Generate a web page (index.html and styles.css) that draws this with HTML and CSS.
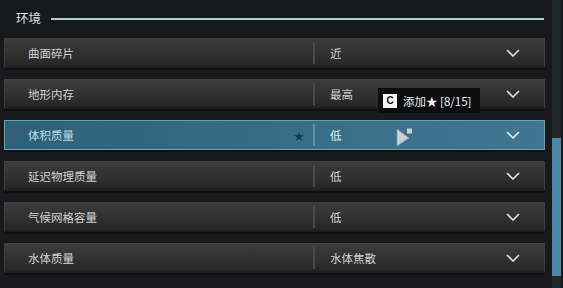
FILE: index.html
```html
<!DOCTYPE html>
<html lang="zh">
<head>
<meta charset="utf-8">
<link rel="stylesheet" href="styles.css">
</head>
<body>
<div class="page">
  <div class="main">
    <div class="header">
      <span class="title">环境</span>
      <span class="rule"></span>
    </div>
    <div class="list">
      <div class="row">
        <div class="label">曲面碎片</div>
        <div class="value">近</div>
        <div class="chev"><svg width="14" height="8" viewBox="0 0 14 8"><path d="M1 1 L7 7 L13 1" fill="none" stroke="#e2e2e2" stroke-width="1.6"/></svg></div>
      </div>
      <div class="row">
        <div class="label">地形内存</div>
        <div class="value">最高</div>
        <div class="chev"><svg width="14" height="8" viewBox="0 0 14 8"><path d="M1 1 L7 7 L13 1" fill="none" stroke="#e2e2e2" stroke-width="1.6"/></svg></div>
      </div>
      <div class="row active">
        <div class="label">体积质量<span class="star">★</span></div>
        <div class="value">低</div>
        <div class="chev"><svg width="14" height="8" viewBox="0 0 14 8"><path d="M1 1 L7 7 L13 1" fill="none" stroke="#dfeef4" stroke-width="1.6"/></svg></div>
      </div>
      <div class="row">
        <div class="label">延迟物理质量</div>
        <div class="value">低</div>
        <div class="chev"><svg width="14" height="8" viewBox="0 0 14 8"><path d="M1 1 L7 7 L13 1" fill="none" stroke="#e2e2e2" stroke-width="1.6"/></svg></div>
      </div>
      <div class="row">
        <div class="label">气候网格容量</div>
        <div class="value">低</div>
        <div class="chev"><svg width="14" height="8" viewBox="0 0 14 8"><path d="M1 1 L7 7 L13 1" fill="none" stroke="#e2e2e2" stroke-width="1.6"/></svg></div>
      </div>
      <div class="row">
        <div class="label">水体质量</div>
        <div class="value">水体焦散</div>
        <div class="chev"><svg width="14" height="8" viewBox="0 0 14 8"><path d="M1 1 L7 7 L13 1" fill="none" stroke="#e2e2e2" stroke-width="1.6"/></svg></div>
      </div>
    </div>
    <div class="tooltip"><span class="key">C</span><span class="tip-text">添加★ [8/15]</span></div>
    <svg class="cursor" width="18" height="20" viewBox="0 0 18 20">
      <path d="M1 1 L1 18 L13 10 Z" fill="#c8d2d6" stroke="#8a989e" stroke-width="0.8"/>
      <rect x="11" y="0.5" width="5" height="5" fill="#c8d2d6"/>
    </svg>
  </div>
  <div class="scroll"><div class="thumb"></div></div>
</div>
</body>
</html>
```
FILE: styles.css
```css
html, body {
  margin: 0;
  padding: 0;
}
body {
  width: 563px;
  height: 288px;
  overflow: hidden;
  background: #17191c;
  font-family: "Noto Sans CJK SC", "Noto Sans", sans-serif;
  font-size: 11.5px;
  color: #d2d2d2;
}
.page {
  display: flex;
  height: 288px;
}
.main {
  position: relative;
  width: 552px;
}
.header {
  display: flex;
  align-items: center;
  height: 38px;
  padding-left: 16px;
  padding-right: 8px;
  box-sizing: border-box;
}
.title {
  font-size: 12.5px;
  color: #dfe3e4;
  margin-right: 10px;
  margin-top: -3px;
}
.rule {
  flex: 1;
  height: 2px;
  background: #a9cfcf;
}
.list {
  display: flex;
  flex-direction: column;
  gap: 11px;
  margin-left: 4px;
  width: 541px;
}
.row {
  display: grid;
  grid-template-columns: 308px 1fr 40px;
  align-items: center;
  height: 30px;
  box-sizing: border-box;
  background: linear-gradient(#3c3c3c, #2b2b2b 80%, #242424);
  border: 1px solid #3f3f3f;
  border-bottom: 2px solid #1e1e1e;
  box-shadow: 0 2px 0 #101010;
}
.label {
  display: flex;
  align-items: center;
  padding-left: 23px;
  height: 100%;
}
.value {
  display: flex;
  align-items: center;
  height: 22px;
  padding-left: 15px;
  border-left: 2px solid #4a4a4a;
}
.chev {
  display: flex;
  align-items: center;
  justify-content: flex-start;
  padding-left: 2px;
  height: 100%;
}
.row.active {
  background: linear-gradient(90deg, #2f6078, #3a6f88 60%, #3f7690);
  border: 1px solid #6aa0b8;
  color: #b9dcea;
}
.row.active .value {
  border-left-color: #5d8ea4;
  color: #dbeef6;
}
.star {
  margin-left: auto;
  margin-right: 9px;
  color: #1c3a4c;
  font-size: 10px;
}
.tooltip {
  position: absolute;
  left: 378px;
  top: 88px;
  height: 25px;
  padding: 0 8px 0 5px;
  display: flex;
  align-items: center;
  gap: 6px;
  background: #0c0d0e;
  color: #f0f0f0;
  font-size: 11.5px;
}
.key {
  display: inline-flex;
  align-items: center;
  justify-content: center;
  width: 14px;
  height: 14px;
  background: #f4f4f4;
  color: #111;
  font-family: "Liberation Sans", sans-serif;
  font-weight: bold;
  font-size: 10px;
}
.cursor {
  position: absolute;
  left: 396px;
  top: 128px;
}
.scroll {
  width: 9px;
  height: 288px;
  background: #22272b;
  display: flex;
  flex-direction: column;
  justify-content: flex-end;
  padding-bottom: 12px;
  box-sizing: border-box;
}
.thumb {
  height: 138px;
  background: #4b87a6;
}
```
